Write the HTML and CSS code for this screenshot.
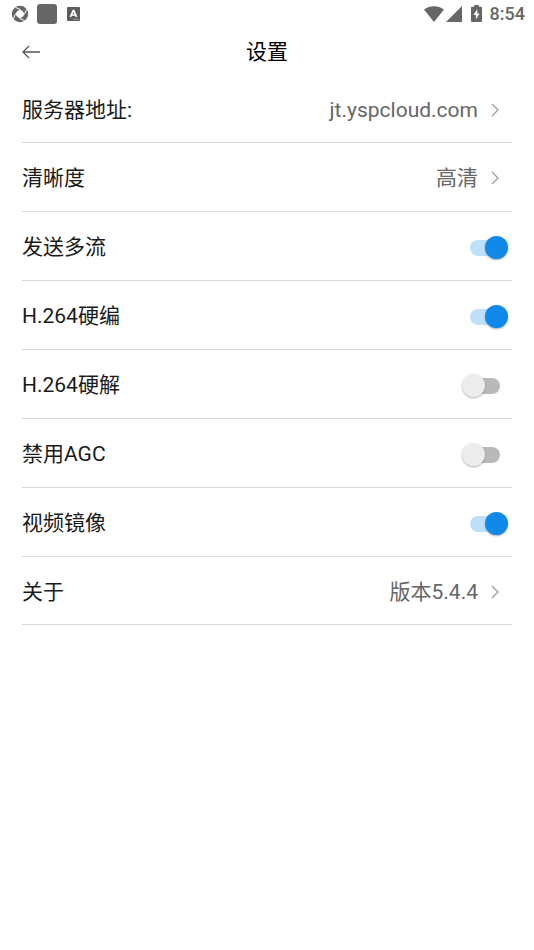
FILE: index.html
```
<!DOCTYPE html>
<html lang="zh-CN">

<head>
  <meta charset="UTF-8">
  <meta name="viewport" content="width=device-width, initial-scale=1.0">
  <title>设置</title>
  <link rel="stylesheet" href="styles.css">
</head>

<body>
  <div class="statusBar">
    <div class="statusLeft">
      <svg width="18" height="18" viewBox="0 0 18 18">
        <circle cx="9" cy="9" r="6" fill="none" stroke="#666" stroke-width="4.4" />
        <path d="M9 4.6 13.4 9 9 13.4 4.6 9z" fill="#fff" />
        <path d="M9.4 4.6 4.6 2.4M13.4 9.4 15.6 4.4M8.6 13.4l5 2.2M4.6 8.6 2.4 13.6" stroke="#fff" stroke-width="1" />
      </svg>
      <svg width="20" height="20" viewBox="0 0 20 20">
        <rect width="20" height="20" rx="3" fill="#666" />
      </svg>
      <svg class="letterIcon" width="13" height="14" viewBox="0 0 13 14">
        <rect width="13" height="14" rx="1" fill="#5c5c5c" />
        <path d="M3.4 10 6.2 3.6h.6L9.6 10M4.6 8h3.8" fill="none" stroke="#fff" stroke-width="1.7" />
        <path d="M6.5 12.2h5" stroke="#ddd" stroke-dasharray="1 1" />
      </svg>
    </div>
    <div class="statusRight">
      <svg width="20" height="16" viewBox="0 0 20 16">
        <path d="M0 3.6C5.6-1 14.4-1 20 3.6L10 16z" fill="#666" />
      </svg>
      <svg width="16" height="16" viewBox="0 0 16 16">
        <path d="M16 0v16H0z" fill="#666" />
      </svg>
      <svg class="battery" width="11" height="17" viewBox="0 0 11 17">
        <path d="M3.2 0h4.6v1.7H10a1 1 0 0 1 1 1V16a1 1 0 0 1-1 1H1a1 1 0 0 1-1-1V2.7a1 1 0 0 1 1-1h2.2z" fill="#666" />
        <path d="M6.3 4 2.5 10h2.4v4.5L8.6 8.4H6.3z" fill="#fff" />
      </svg>
      <span class="time">8:54</span>
    </div>
  </div>

  <header class="header">
    <button class="back" type="button" aria-label="返回">
      <svg width="18" height="14" viewBox="0 0 18 14">
        <path d="M7 1 1 7l6 6M1 7h17" fill="none" stroke="#555" stroke-width="1.3" />
      </svg>
    </button>
    <h1 class="title">设置</h1>
  </header>

  <main class="settings">
    <a class="row" href="#server">
      <span class="label">服务器地址:</span>
      <span class="value">jt.yspcloud.com</span>
      <svg class="arrow" width="8" height="14" viewBox="0 0 8 14">
        <path d="M1 1l6 6-6 6" />
      </svg>
    </a>
    <a class="row" href="#quality">
      <span class="label">清晰度</span>
      <span class="value">高清</span>
      <svg class="arrow" width="8" height="14" viewBox="0 0 8 14">
        <path d="M1 1l6 6-6 6" />
      </svg>
    </a>
    <div class="row">
      <label class="label" for="multiStream">发送多流</label>
      <input class="switch" type="checkbox" id="multiStream" checked>
    </div>
    <div class="row">
      <label class="label" for="encode">H.264硬编</label>
      <input class="switch" type="checkbox" id="encode" checked>
    </div>
    <div class="row">
      <label class="label" for="decode">H.264硬解</label>
      <input class="switch" type="checkbox" id="decode">
    </div>
    <div class="row">
      <label class="label" for="agc">禁用AGC</label>
      <input class="switch" type="checkbox" id="agc">
    </div>
    <div class="row">
      <label class="label" for="mirror">视频镜像</label>
      <input class="switch" type="checkbox" id="mirror" checked>
    </div>
    <a class="row" href="#about">
      <span class="label">关于</span>
      <span class="value">版本5.4.4</span>
      <svg class="arrow" width="8" height="14" viewBox="0 0 8 14">
        <path d="M1 1l6 6-6 6" />
      </svg>
    </a>
  </main>
</body>

</html>
```

FILE: styles.css
```
* {
  box-sizing: border-box;
  padding: 0;
  margin: 0;
}

body {
  color: #1a1a1a;
  background: #fff;
  font-family: Roboto, 'Noto Sans CJK SC', sans-serif;
  font-size: 21px;
  line-height: 24px;
}

/* 状态栏 */
.statusBar {
  display: flex;
  align-items: center;
  justify-content: space-between;
  height: 27px;
  padding: 0 9px 0 11px;
}

.statusLeft,
.statusRight {
  display: flex;
  align-items: center;
}

.statusLeft {
  gap: 8px;
}

.letterIcon {
  margin-left: 2px;
}

.statusRight {
  gap: 2px;
}

.battery {
  margin-left: 7px;
}

.time {
  margin-left: 6px;
  color: #666;
  font-size: 18px;
  font-weight: 500;
}

/* 标题栏 */
.header {
  display: grid;
  grid-template-columns: 40px 1fr 40px;
  align-items: center;
  height: 49px;
  padding: 0 22px;
}

.back {
  display: flex;
  align-items: center;
  height: 40px;
  border: 0;
  background: none;
}

.title {
  color: #000;
  font-size: 21px;
  font-weight: 400;
  text-align: center;
}

/* 设置列表 */
.settings {
  padding: 0 22px;
}

.row {
  display: flex;
  align-items: center;
  height: 69px;
  padding-top: 2px;
  border-bottom: 1px solid #d6d6d6;
  color: inherit;
  text-decoration: none;
}

.row:first-child {
  height: 67px;
}

.row:last-child {
  height: 68px;
}

.label {
  flex: 1;
}

.value {
  color: #666;
}

.arrow {
  margin: 0 13px;
  fill: none;
  stroke: #999;
  stroke-width: 1.2;
}

/* 开关 */
.switch {
  position: relative;
  width: 46px;
  height: 23px;
  margin-right: 4px;
  appearance: none;
}

.switch::before {
  content: '';
  position: absolute;
  top: 4px;
  left: 8px;
  width: 30px;
  height: 16px;
  border-radius: 8px;
  background: #b9b9b9;
}

.switch::after {
  content: '';
  position: absolute;
  top: 0;
  left: 0;
  width: 23px;
  height: 23px;
  border-radius: 50%;
  background: #ececec;
  box-shadow: 0 1px 2px rgba(0, 0, 0, .3);
}

.switch:checked::before {
  background: #bfe0f9;
}

.switch:checked::after {
  left: 23px;
  background: #1189e9;
}
```
